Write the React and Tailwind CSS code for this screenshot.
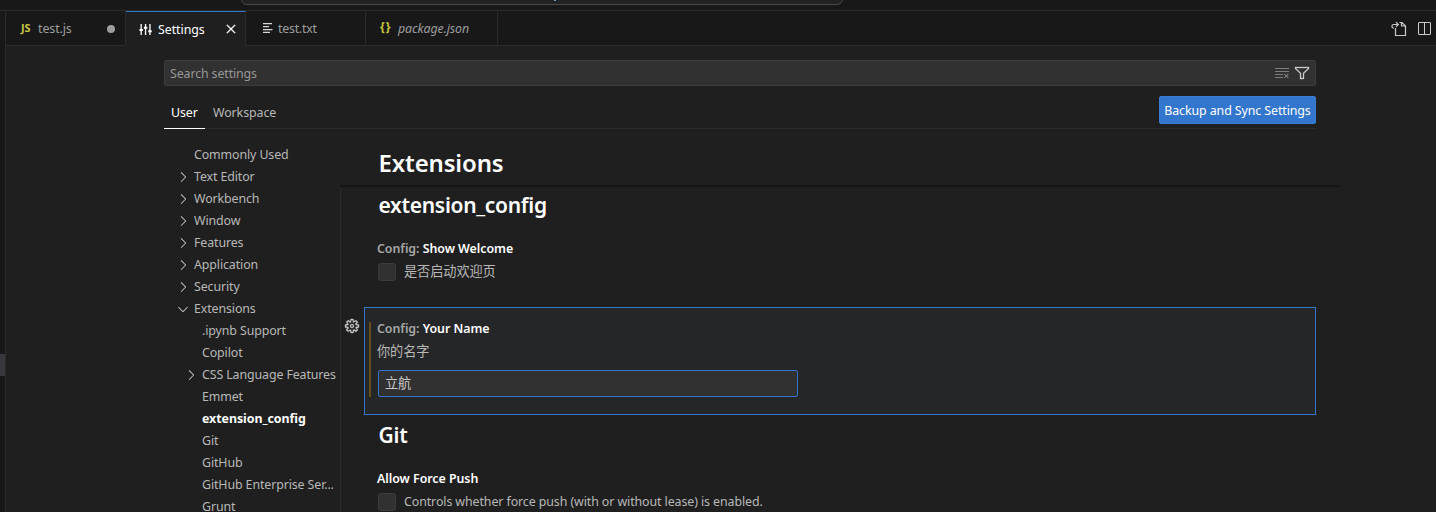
import React from 'react';
import {
  VscChevronDown, VscChevronRight, VscClearAll, VscClose, VscFilter,
  VscGear, VscSplitHorizontal,
} from 'react-icons/vsc';

const tree = [
  { label: 'Commonly Used' },
  { label: 'Text Editor', chevron: 'right' },
  { label: 'Workbench', chevron: 'right' },
  { label: 'Window', chevron: 'right' },
  { label: 'Features', chevron: 'right' },
  { label: 'Application', chevron: 'right' },
  { label: 'Security', chevron: 'right' },
  { label: 'Extensions', chevron: 'down' },
  { label: '.ipynb Support', child: true },
  { label: 'Copilot', child: true },
  { label: 'CSS Language Features', child: true, chevron: 'right' },
  { label: 'Emmet', child: true },
  { label: 'extension_config', child: true, active: true },
  { label: 'Git', child: true },
  { label: 'GitHub', child: true },
  { label: 'GitHub Enterprise Ser...', child: true },
  { label: 'Grunt', child: true },
];

function TreeRow({ label, chevron, child, active }) {
  return (
    <div className={`flex h-[22px] shrink-0 items-center whitespace-nowrap ${child ? 'pl-[19px]' : 'pl-[11px]'} ${active ? 'font-bold text-white tracking-[-0.05px]' : 'text-[#b8b8b8]'}`}>
      <span className="mr-[3px] flex h-4 w-4 shrink-0 items-center text-[#cccccc]">
        {chevron === 'right' && <VscChevronRight size={16} />}
        {chevron === 'down' && <VscChevronDown size={16} />}
      </span>
      {label}
    </div>
  );
}

function SlidersIcon() {
  return (
    <svg width="14" height="14" viewBox="0 0 14 14" className="mr-[5px] shrink-0" fill="currentColor">
      <path d="M1.5 1h1.3v11H1.5zM5.9 1h1.3v11H5.9zM10.3 1h1.3v11h-1.3zM.5 6h3.4v2H.5zM4.9 3.7h3.4v2H4.9zM9.3 7.2h3.4v2H9.3z" />
    </svg>
  );
}

function OpenFileIcon() {
  return (
    <svg width="16" height="16" viewBox="0 0 16 16" fill="none" stroke="currentColor" strokeWidth="1.2">
      <path d="M4.5 7v7.5h10V5L11 1.5H8.5M10.5 1.5V5h4" />
      <path d="M2.8 7.2C.2 6.8.2 3.5 3 3.5h4M5 1.2l2.3 2.3L5 5.8" />
    </svg>
  );
}

function Tab({ className = '', children }) {
  return (
    <div className={`flex h-[35px] shrink-0 items-center border-r border-b border-[#2b2b2b] pt-[3px] text-[#9d9d9d] ${className}`}>
      {children}
    </div>
  );
}

function Tabs() {
  return (
    <div className="flex h-[35px] shrink-0 bg-[#181818]">
      <Tab className="w-[120px] pl-[15px]">
        <span className="-mt-[3px] w-[17px] text-[10.8px] font-bold text-[#cbcb41]">JS</span>
        <span className="flex-1">test.js</span>
        <span className="-mt-px mr-[10px] h-2 w-2 rounded-full bg-[#9d9d9d]" />
      </Tab>
      <div className="flex h-[35px] w-[120px] shrink-0 items-center border-t border-r border-t-[#3376cd] border-r-[#2b2b2b] bg-[#1f1f1f] pl-[13px] pt-[2px] text-white">
        <SlidersIcon />
        <span className="flex-1 tracking-[-0.05px]">Settings</span>
        <VscClose size={16} className="-mt-[2px] mr-[6px]" strokeWidth={0.4} />
      </div>
      <Tab className="w-[120px] pl-[17px]">
        <svg width="10" height="10" viewBox="0 0 10 10" className="mr-[5px] -mt-[4px]" fill="#d4d7d6">
          <path d="M0 0h9v1.3H0zM0 3h6v1.3H0zM0 6h9.5v1.3H0zM0 8.7h7V10H0z" />
        </svg>
        <span className="tracking-[-0.25px]">test.txt</span>
      </Tab>
      <Tab className="w-[132px] pl-[14px]">
        <span className="mr-1 -mt-[5px] w-[14px] text-[12px] font-bold tracking-[1px] text-[#cbcb41]">{'{}'}</span>
        <span className="italic tracking-[-0.1px]">package.json</span>
      </Tab>
      <div className="flex flex-1 items-center justify-end gap-[9px] border-b border-[#2b2b2b] pr-[4px] pt-px text-[#cccccc]">
        <OpenFileIcon />
        <VscSplitHorizontal size={16} />
      </div>
    </div>
  );
}

function Checkbox() {
  return <span className="mr-2 h-[18px] w-[18px] shrink-0 rounded-[3px] border border-[#3c3c3c] bg-[#313131]" />;
}

function Name({ scope, children }) {
  return (
    <div className="h-[18px] whitespace-nowrap font-semibold leading-[18px] tracking-[-0.04px] text-white">
      {scope && <span className="text-[#a6a6a6]">{scope} </span>}
      {children}
    </div>
  );
}

export default function App() {
  return (
    <div className="flex h-[512px] w-full flex-col overflow-hidden bg-[#181818] font-['Noto_Sans','Noto_Sans_CJK_SC',sans-serif] text-[12.4px] tracking-[-0.09px] text-[#cccccc]">
      <div className="flex h-[10px] shrink-0 overflow-hidden pl-[241px]">
        <div className="-mt-[17px] flex h-[22px] w-[602px] shrink-0 items-end justify-center rounded-[6px] border border-[#484848] bg-[#222222]">
          <span className="mb-[3px] mr-[-26px] h-px w-[2px] self-end bg-[#6aa0c8]" />
        </div>
      </div>
      <div className="flex min-h-0 flex-1 border-t border-[#2b2b2b]">
        <div className="w-[5px] shrink-0 pt-[343px]">
          <div className="h-[22px] bg-[#37373d]" />
        </div>
        <div className="flex min-w-0 flex-1 flex-col border-l border-[#2b2b2b] bg-[#1f1f1f]">
          <Tabs />
          <div className="flex min-h-0 flex-1 flex-col pl-[158px] pt-[14px]">
            <div className="flex h-[26px] w-[1152px] shrink-0 items-center rounded-[2px] border border-[#3c3c3c] bg-[#313131] pl-[5px] pr-[5px]">
              <span className="flex-1 pt-[2px] tracking-[-0.12px] text-[#989898]">Search settings</span>
              <VscClearAll size={16} className="mr-1 text-[#7e7e7e]" />
              <VscFilter size={16} strokeWidth={0.3} />
            </div>
            <div className="flex h-[43px] w-[1152px] shrink-0 items-end border-b border-[#2b2b2b]">
              <div className="-mb-px h-[33px] w-[41px] border-b border-white pl-[7px] leading-[33px] tracking-[-0.1px] text-white">User</div>
              <div className="-mb-px h-[33px] flex-1 pl-2 leading-[33px] text-[#b8b8b8]">Workspace</div>
              <button className="mb-1 h-7 w-[157px] whitespace-nowrap rounded-[2px] border border-[#3c7cd0] bg-[#3376cd] pt-[2px] text-white">Backup and Sync Settings</button>
            </div>
            <div className="flex min-h-0 flex-1">
              <div className="flex w-[176px] shrink-0 flex-col overflow-hidden pt-[15px] tracking-[-0.11px]">
                {tree.map((row) => <TreeRow key={row.label} {...row} />)}
              </div>
              <div className="flex w-[1000px] shrink-0 flex-col">
                <div className="h-[56px] shrink-0 pl-[38.5px] pt-[18px] text-[24px] font-semibold leading-[32px] tracking-[-0.15px] text-white">Extensions</div>
                <div className="h-[3px] shrink-0 bg-gradient-to-b from-[#121212] to-[#1d1d1d]" />
                <div className="flex min-h-0 flex-1 flex-col overflow-hidden border-l border-[#2b2b2b]">
                  <div className="h-[52px] shrink-0 pl-[37.5px] pt-[3px] text-[21px] font-semibold leading-[28px] tracking-[-0.3px] text-white">extension_config</div>
                  <div className="h-[67px] shrink-0 pl-[36px]">
                    <Name scope="Config:">Show Welcome</Name>
                    <div className="mt-[5px] flex h-[18px] items-center pl-px text-[#b8b8b8]"><Checkbox /><span className="text-[13.2px]">是否启动欢迎页</span></div>
                  </div>
                  <div className="flex h-[108px] shrink-0 pl-[3px]">
                    <VscGear size={16} className="mr-1 mt-[11px] shrink-0" strokeWidth={0.3} />
                    <div className="flex w-[952px] border border-[#3376cd] bg-[#252627] pl-1 pt-[14px]">
                      <div className="mr-[6px] h-[75px] w-[2px] bg-[#664d1e]" />
                      <div className="-mt-[2px]">
                        <Name scope="Config:">Your Name</Name>
                        <div className="mt-[4px] h-[18px] text-[13.2px] leading-[18px] text-[#b8b8b8]">你的名字</div>
                        <div className="ml-px mt-[10px] flex h-[27px] w-[420px] items-center rounded-[2px] border border-[#3376cd] bg-[#313131] pl-[6px] pt-px text-[13.2px]">立航</div>
                      </div>
                    </div>
                  </div>
                  <div className="h-[55px] shrink-0 pl-[37.5px] pt-[6px] text-[21px] font-semibold leading-[28px] tracking-[-0.2px] text-white">Git</div>
                  <div className="shrink-0 pl-[36px]">
                    <Name>Allow Force Push</Name>
                    <div className="mt-[5px] flex h-[18px] items-center pl-px tracking-[-0.09px] text-[#b8b8b8]"><Checkbox />Controls whether force push (with or without lease) is enabled.</div>
                  </div>
                </div>
              </div>
            </div>
          </div>
        </div>
      </div>
    </div>
  );
}
